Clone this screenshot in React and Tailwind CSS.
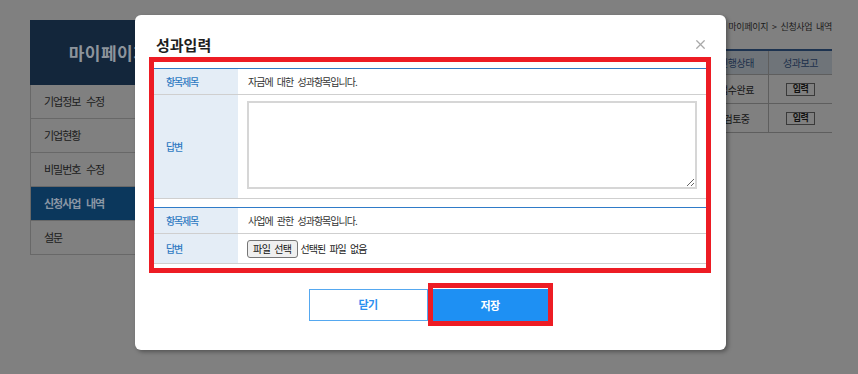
import { X } from 'lucide-react'

const menu = ['기업정보 수정', '기업현황', '비밀번호 수정', '신청사업 내역', '설문']

export default function App() {
  return (
    <div className="relative w-[858px] h-[374px] overflow-hidden bg-[#808080] font-['Noto_Sans_CJK_KR','Noto_Sans',sans-serif]">
      {/* PAGE BEHIND THE DIM */}
      <div className="flex pt-[20px] pl-[30px] pr-[26px]">
        <aside className="w-[158px]">
          <div className="h-[65px] bg-[#13263b] flex items-center justify-center text-[17px] font-bold text-[#8d949c] tracking-[0.5px]">
            마이페이지
          </div>
          {menu.map((m, i) => (
            <div
              key={m}
              className={`h-[34px] border-l border-r border-b border-[#686868] flex items-center pl-[13px] text-[11px] tracking-[-1px] [word-spacing:4px] ${
                i === 3 ? 'bg-[#0b375c] text-[#8a96a4] font-bold border-[#0b375c]' : 'text-[#1c1c1c]'
              }`}
            >
              {m}
            </div>
          ))}
        </aside>

        <main className="flex-1 ml-[30px]">
          <div className="h-[14px] leading-[14px] text-right text-[9px] text-[#1a1a1a] tracking-[-0.3px] [word-spacing:2px]">
            홈 &gt; 마이페이지 &gt; 신청사업 내역
          </div>
          <div className="mt-[15px] border-t-2 border-[#1d3350]">
            <div className="grid grid-cols-[1fr_64px_64px] h-[24px] bg-[#6f7479] border-b border-[#5e5e5e] text-[10px] text-[#1b2f4a] tracking-[-0.5px]">
              <div className="flex items-center justify-center">사업명</div>
              <div className="flex items-center justify-center border-l border-[#5e5e5e]">진행상태</div>
              <div className="flex items-center justify-center border-l border-[#5e5e5e]">성과보고</div>
            </div>
            {['접수완료', '검토중'].map((s) => (
              <div key={s} className="grid grid-cols-[1fr_64px_64px] h-[29px] border-b border-[#5e5e5e] text-[10px] text-[#141414] tracking-[-0.5px]">
                <div className="flex items-center justify-center">지원사업</div>
                <div className="flex items-center justify-center border-l border-[#5e5e5e]">{s}</div>
                <div className="flex items-center justify-center border-l border-[#5e5e5e]">
                  <span className="w-[29px] h-[13px] border border-[#3a3a3a] flex items-center justify-center text-[9px] font-bold text-[#111]">
                    입력
                  </span>
                </div>
              </div>
            ))}
          </div>
        </main>
      </div>

      {/* MODAL */}
      <div className="absolute left-[135px] top-[15px] w-[591px] h-[335px] bg-white rounded-[6px] shadow-[2px_2px_4px_rgba(0,0,0,0.35)]">
        <div className="h-[42px] pt-[16px] pl-[21px] pr-[18px] flex items-center justify-between">
          <h2 className="text-[15px] font-bold text-[#1e1e1e] leading-none">성과입력</h2>
          <X size={15} strokeWidth={2} className="text-[#a8a8a8]" />
        </div>

        <div className="ml-[14px] mr-[15px] border-[5px] border-[#ed1c24] pt-[6px] pb-[4px]">
          <div className="border-t border-[#2f7bc8]">
            <Row label="항목제목" h="h-[26px]">
              <span className="pl-[10px] text-[10px] text-[#333] tracking-[-1px] [word-spacing:3px]">자금에 대한 성과항목입니다.</span>
            </Row>
            <Row label="답변" h="h-[104px]">
              <div className="pl-[9px] pr-[9px] pt-[6px] pb-[9px] w-full h-full">
                <textarea className="block w-full h-full resize-y border-2 border-[#d6d6d6] outline-none" />
              </div>
            </Row>
          </div>

          <div className="mt-[8px] border-t border-[#2f7bc8]">
            <Row label="항목제목" h="h-[26px]">
              <span className="pl-[10px] text-[10px] text-[#333] tracking-[-1px] [word-spacing:3px]">사업에 관한 성과항목입니다.</span>
            </Row>
            <Row label="답변" h="h-[30px]">
              <div className="pl-[9px] flex items-center gap-[3px]">
                <span className="h-[18px] px-[5px] border border-[#767676] rounded-[3px] bg-[#efefef] flex items-center text-[10px] text-[#111] tracking-[-0.5px] [word-spacing:2px]">
                  파일 선택
                </span>
                <span className="text-[10px] text-[#222] tracking-[-1px] [word-spacing:3px]">선택된 파일 없음</span>
              </div>
            </Row>
          </div>
        </div>

        <div className="mt-[10px] flex items-center justify-center">
          <button className="w-[119px] h-[32px] border border-[#55a8f0] bg-white text-[#2a8ff0] text-[11px] font-bold tracking-[-0.5px]">
            닫기
          </button>
          <div className="border-[5px] border-[#ed1c24] pt-px">
            <button className="w-[115px] h-[32px] bg-[#1e90f3] text-white text-[11px] font-bold tracking-[-0.5px]">
              저장
            </button>
          </div>
        </div>
      </div>
    </div>
  )
}

function Row({ label, h, children }) {
  return (
    <div className={`flex ${h} border-b border-[#cfcfcf]`}>
      <div className="w-[84px] shrink-0 bg-[#e4edf6] flex items-center pl-[12px] text-[10px] font-medium text-[#2f7ac2] tracking-[-1.2px]">
        {label}
      </div>
      <div className="flex-1 flex items-center">{children}</div>
    </div>
  )
}
